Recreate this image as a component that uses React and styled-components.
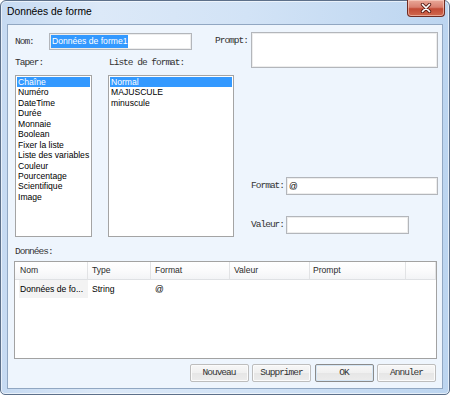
import React from "react";
import styled, { createGlobalStyle } from "styled-components";

const Global = createGlobalStyle`
  html, body { margin: 0; padding: 0; background: #ffffff; }
  body { width: 450px; height: 395px; overflow: hidden; }
`;

const Window = styled.div`
  box-sizing: border-box;
  width: 450px;
  height: 395px;
  display: flex;
  flex-direction: column;
  border: 1px solid #5d708a;
  border-radius: 6px 6px 5px 5px;
  background: linear-gradient(90deg, #c6daf2 0%, #dce9f8 22%, #d2e3f6 55%, #bcd5f0 100%);
  box-shadow: inset 0 0 0 1px rgba(255, 255, 255, 0.6);
  padding: 0 6px 5px 6px;
  font-family: "Liberation Sans", Arial, sans-serif;
`;

const TitleBar = styled.div`
  height: 23px;
  display: flex;
  align-items: flex-start;
  justify-content: space-between;
`;

const Title = styled.div`
  padding-top: 4px;
  font-size: 10.3px;
  line-height: 14px;
  color: #000;
`;

const CloseBtn = styled.div`
  box-sizing: border-box;
  width: 38px;
  height: 17px;
  margin: -1px -2px 0 0;
  border: 1px solid #6f2b22;
  border-top: none;
  border-radius: 0 0 4px 4px;
  background: linear-gradient(180deg, #e9a899 0%, #d98070 45%, #c24b36 55%, #d0694f 100%);
  box-shadow: inset 0 0 0 1px rgba(255, 220, 210, 0.55);
  display: flex;
  align-items: center;
  justify-content: center;
`;

const Client = styled.div`
  flex: 1;
  box-sizing: border-box;
  border: 1px solid #91a7c2;
  background: #eef5fd;
  padding: 7px 4px 6px 7px;
  display: flex;
  flex-direction: column;
`;

const TopSection = styled.div`
  display: grid;
  grid-template-columns: 200px 19px 1fr;
`;

const LeftBlock = styled.div`
  grid-column: 1 / 3;
  grid-row: 1;
  display: flex;
  flex-direction: column;
`;

const RightBlock = styled.div`
  grid-column: 2 / 4;
  grid-row: 1;
  display: flex;
  flex-direction: column;
`;

const Label = styled.span`
  font-family: "Liberation Mono", "Courier New", monospace;
  font-size: 9.5px;
  letter-spacing: -1px;
  line-height: 10px;
  color: #333;
  white-space: nowrap;
`;

const NomRow = styled.div`
  margin-top: 1px;
  display: flex;
  align-items: center;
`;

const NomLabel = styled(Label)`
  width: 34px;
`;

const Field = styled.div`
  box-sizing: border-box;
  width: ${(p) => p.$w}px;
  height: ${(p) => p.$h}px;
  background: #fff;
  border: 1px solid #b3b6bb;
  box-shadow: inset 0 0 0 1px #ededed;
  display: flex;
  align-items: ${(p) => (p.$top ? "flex-start" : "center")};
  padding-left: ${(p) => p.$pad}px;
  font-size: 8.6px;
  color: #000;
`;

const Selected = styled.span`
  background: #3399ff;
  color: #fff;
  height: 13px;
  line-height: 13px;
  padding: 0 1px;
`;

const ListsRow = styled.div`
  margin-top: 8px;
  display: flex;
  gap: 16px;
`;

const ListCol = styled.div`
  width: ${(p) => p.$w}px;
  display: flex;
  flex-direction: column;
`;

const ListLabel = styled(Label)`
  padding-left: ${(p) => p.$indent || 0}px;
`;

const ListBox = styled.div`
  box-sizing: border-box;
  margin-top: 7px;
  height: 162px;
  background: #fff;
  border: 1px solid #a4a4a4;
  padding: 1px;
`;

const ListItem = styled.div`
  height: 10.45px;
  line-height: 10.45px;
  font-size: 8.6px;
  padding-left: 1px;
  white-space: nowrap;
  color: ${(p) => (p.$sel ? "#fff" : "#000")};
  background: ${(p) => (p.$sel ? "#3399ff" : "transparent")};
`;

const PromptRow = styled.div`
  display: flex;
  align-items: flex-start;
`;

const PromptLabel = styled(Label)`
  width: 36px;
  padding-top: 4px;
`;

const FieldRow = styled.div`
  margin-top: ${(p) => p.$mt}px;
  padding-left: 35px;
  display: flex;
  align-items: center;
`;

const FieldLabel = styled(Label)`
  box-sizing: border-box;
  width: 36px;
  padding-right: 2px;
  text-align: right;
`;

const DataLabel = styled(Label)`
  margin-top: 10px;
`;

const Table = styled.div`
  box-sizing: border-box;
  height: 98px;
  margin: 4px 1px 0 -1px;
  border: 1px solid #a2a2a2;
  background: #fff;
  display: grid;
  grid-template-columns: 73px 63px 79px 80px 96px 1fr;
  grid-auto-rows: 18px;
  align-content: start;
  font-size: 8.6px;
`;

const HeadCell = styled.div`
  box-sizing: border-box;
  border-right: 1px solid #e2e3e5;
  border-bottom: 1px solid #dfe1e4;
  background: linear-gradient(180deg, #ffffff 0%, #fbfbfc 50%, #f3f4f6 100%);
  padding-left: ${(p) => p.$pad || 4}px;
  line-height: 17px;
  color: #2b2b2b;
  white-space: nowrap;
`;

const Cell = styled.div`
  box-sizing: border-box;
  line-height: 18px;
  padding-left: 4px;
  color: #000;
  white-space: nowrap;
  overflow: hidden;
`;

const FirstCell = styled(Cell)`
  margin-left: 4px;
  padding-left: 1px;
  background: #f3f3f3;
`;

const ButtonRow = styled.div`
  margin: 5px 2px 0 0;
  display: flex;
  justify-content: flex-end;
  gap: 3.5px;
`;

const Button = styled.div`
  box-sizing: border-box;
  width: 59px;
  height: 18px;
  border: 1px solid ${(p) => (p.$def ? "#8a8a8a" : "#bdbdbd")};
  border-radius: 2px;
  background: linear-gradient(180deg, #f7f7f7 0%, #f0f0f0 50%, #e6e6e6 51%, #ececec 100%);
  box-shadow: inset 0 0 0 1px ${(p) => (p.$def ? "#d5e6f5" : "#fbfbfb")};
  display: flex;
  align-items: center;
  justify-content: center;
`;

const types = [
  "Chaîne", "Numéro", "DateTime", "Durée", "Monnaie", "Boolean",
  "Fixer la liste", "Liste des variables", "Couleur", "Pourcentage",
  "Scientifique", "Image",
];
const formats = ["Normal", "MAJUSCULE", "minuscule"];

export default function App() {
  return (
    <>
      <Global />
      <Window>
        <TitleBar>
          <Title>Données de forme</Title>
          <CloseBtn>
            <svg width="12" height="10" viewBox="0 0 12 10">
              <path d="M2.5 1.5 L9.5 8.5 M9.5 1.5 L2.5 8.5" stroke="#5b1f18" strokeWidth="3.4" strokeLinecap="round" />
              <path d="M2.5 1.5 L9.5 8.5 M9.5 1.5 L2.5 8.5" stroke="#ffffff" strokeWidth="1.7" strokeLinecap="round" />
            </svg>
          </CloseBtn>
        </TitleBar>
        <Client>
          <TopSection>
            <LeftBlock>
              <NomRow>
                <NomLabel>Nom:</NomLabel>
                <Field $w={143} $h={17} $pad={1}>
                  <Selected>Données de forme1</Selected>
                </Field>
              </NomRow>
              <ListsRow>
                <ListCol $w={77}>
                  <ListLabel>Taper:</ListLabel>
                  <ListBox>
                    {types.map((t, i) => (
                      <ListItem key={t} $sel={i === 0}>{t}</ListItem>
                    ))}
                  </ListBox>
                </ListCol>
                <ListCol $w={126}>
                  <ListLabel $indent={1}>Liste de format:</ListLabel>
                  <ListBox>
                    {formats.map((t, i) => (
                      <ListItem key={t} $sel={i === 0}>{t}</ListItem>
                    ))}
                  </ListBox>
                </ListCol>
              </ListsRow>
            </LeftBlock>
            <RightBlock>
              <PromptRow>
                <PromptLabel>Prompt:</PromptLabel>
                <Field $w={187} $h={36} $pad={2} $top />
              </PromptRow>
              <FieldRow $mt={109}>
                <FieldLabel>Format:</FieldLabel>
                <Field $w={152} $h={18} $pad={2}>@</Field>
              </FieldRow>
              <FieldRow $mt={21}>
                <FieldLabel>Valeur:</FieldLabel>
                <Field $w={123} $h={18} $pad={2} />
              </FieldRow>
            </RightBlock>
          </TopSection>
          <DataLabel>Données:</DataLabel>
          <Table>
            <HeadCell $pad={5}>Nom</HeadCell>
            <HeadCell>Type</HeadCell>
            <HeadCell>Format</HeadCell>
            <HeadCell>Valeur</HeadCell>
            <HeadCell $pad={3}>Prompt</HeadCell>
            <HeadCell />
            <FirstCell>Données de fo...</FirstCell>
            <Cell>String</Cell>
            <Cell>@</Cell>
            <Cell />
            <Cell />
            <Cell />
          </Table>
          <ButtonRow>
            <Button><Label>Nouveau</Label></Button>
            <Button><Label>Supprimer</Label></Button>
            <Button $def><Label>OK</Label></Button>
            <Button><Label>Annuler</Label></Button>
          </ButtonRow>
        </Client>
      </Window>
    </>
  );
}
